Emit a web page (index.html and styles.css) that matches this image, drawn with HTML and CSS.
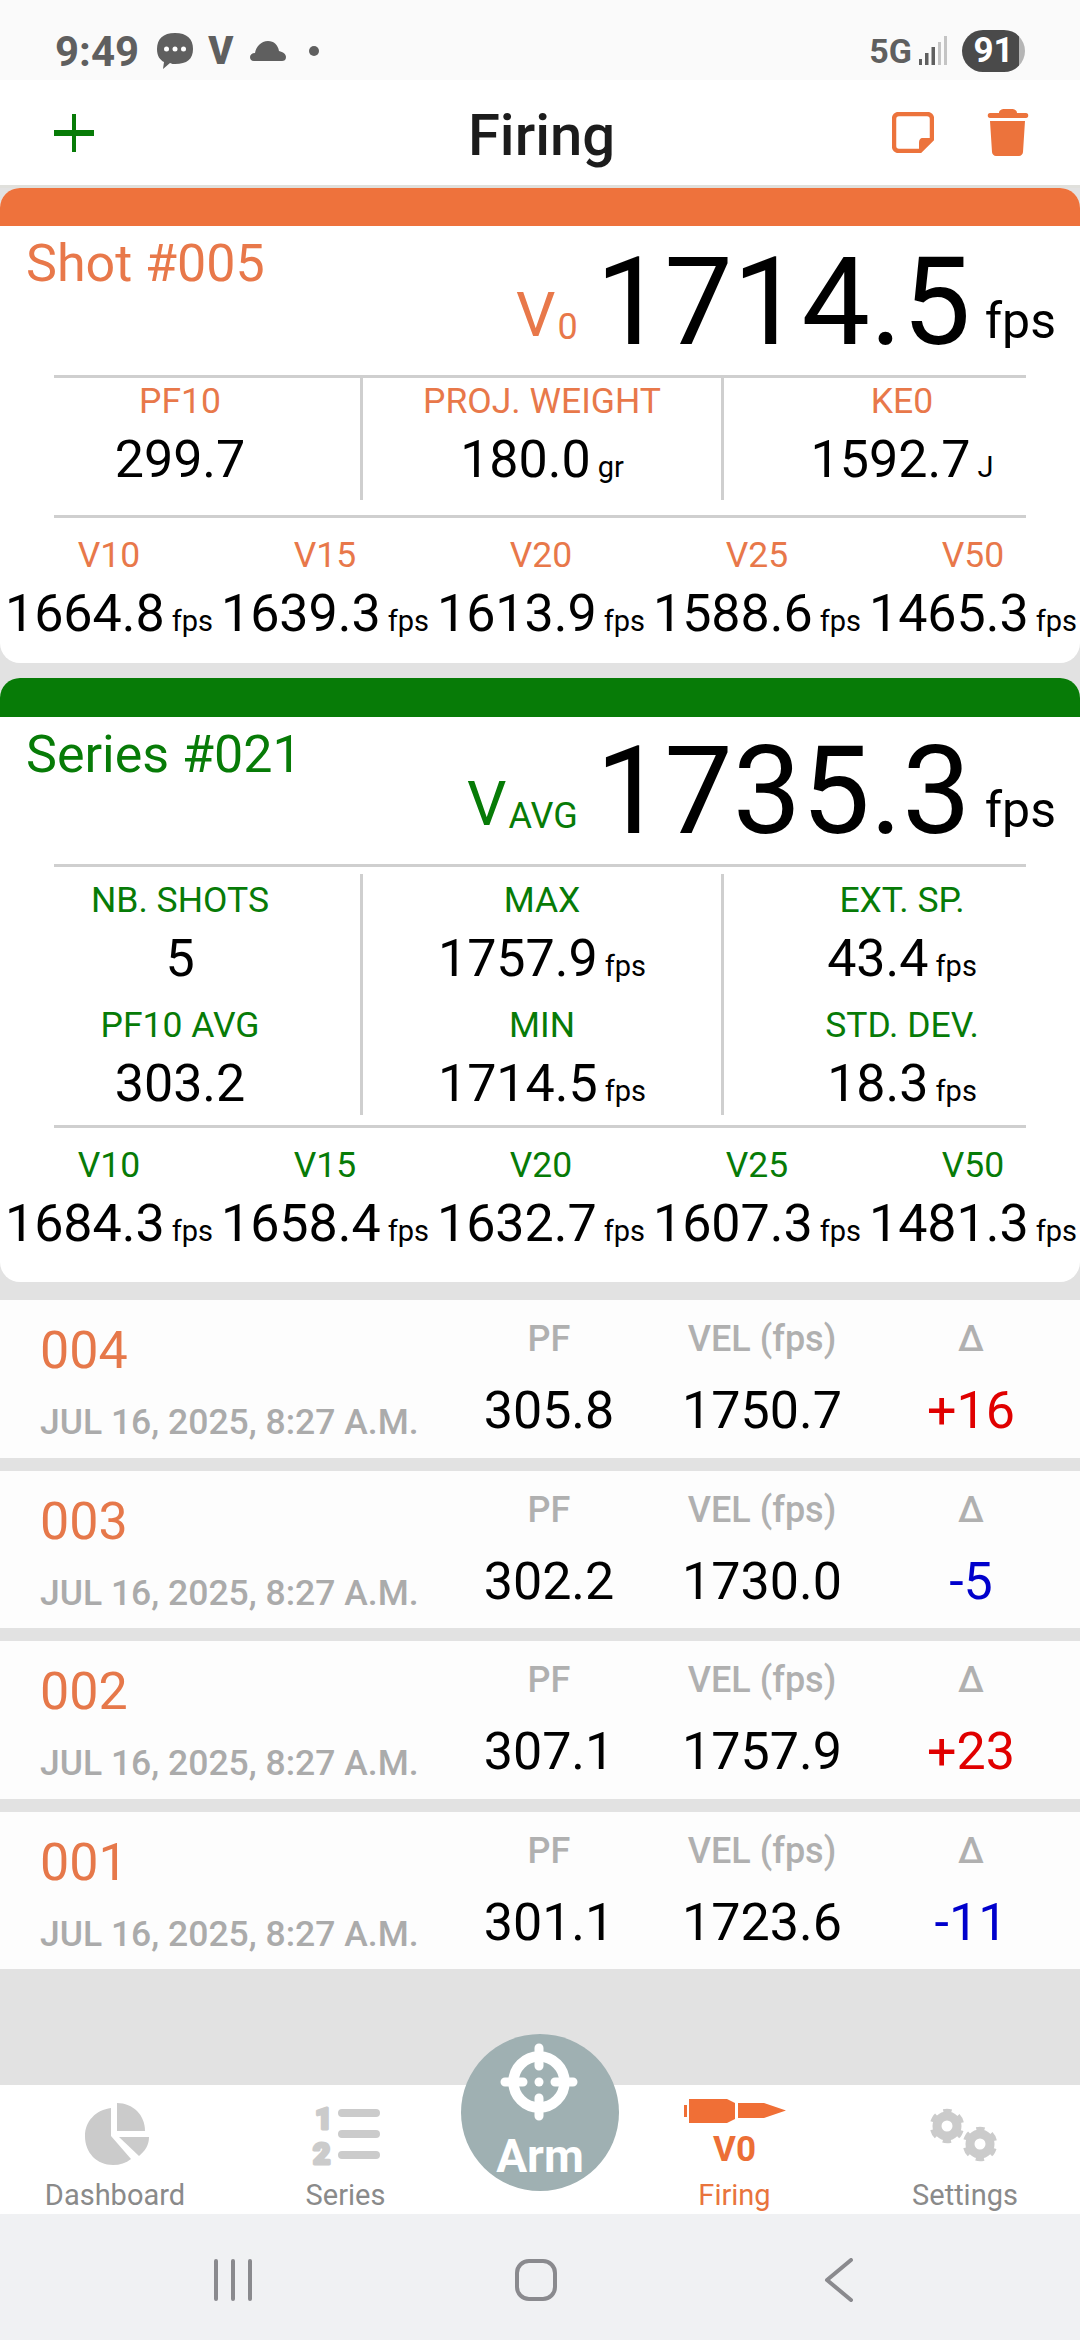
FILE: index.html
```html
<!DOCTYPE html>
<html>
<head>
    <meta charset="UTF-8">
    <title>Firing</title>
    <link rel="stylesheet" href="styles.css">
</head>
<body>
<div class="phone">

    <!-- android status bar -->
    <div class="status-bar">
        <div class="status-left">
            <span class="clock">9:49</span>
            <svg width="36" height="36" viewBox="0 0 36 36"><path d="M18 0C30 0 36 6 36 16C36 26 30 31 18 31C16 31 15 31 13 30L6 36L7 29C3 27 0 23 0 16C0 6 6 0 18 0Z" fill="#5f5f5f"/><circle cx="9.500" cy="16" r="2.500" fill="#fff"/><circle cx="18" cy="16" r="2.500" fill="#fff"/><circle cx="26.500" cy="16" r="2.500" fill="#fff"/></svg>
            <span class="status-v">V</span>
            <svg width="36" height="20" viewBox="0 0 36 20"><path d="M4 20C1 20 0 18 0 16C0 14 2 12 5 12C6 6 11 0 18 0C24 0 28 4 29 10C33 11 36 13 36 16C36 19 34 20 32 20Z" fill="#5f5f5f"/></svg>
            <span class="status-dot"></span>
        </div>
        <div class="status-right">
            <span class="network">5G</span>
            <svg width="28" height="30" viewBox="0 0 28 30"><path d="M0 23h3v6H0zM6 17h3.500v12H6zM12.500 11H16v18h-3.500z" fill="#5f5f5f"/><path d="M19 6h3v23h-3zM25 0h3v29h-3z" fill="#c4c4c4"/></svg>
            <span class="battery">91</span>
        </div>
    </div>

    <!-- title bar -->
    <div class="top-bar">
        <svg width="40" height="40" viewBox="0 0 40 40"><path d="M20 1V39" stroke="#077b07" stroke-width="4" fill="none"/><path d="M1 20H39" stroke="#077b07" stroke-width="6" stroke-linecap="round" fill="none"/></svg>
        <div class="top-title">Firing</div>
        <div class="top-actions">
            <svg width="42" height="41" viewBox="0 0 42 41"><path d="M7 2H35C38 2 40 4 40 7V27L28 39H7C4 39 2 37 2 34V7C2 4 4 2 7 2Z" fill="none" stroke="#ec733c" stroke-width="4.500"/><path d="M27 39V31C27 28 28 26 31 26H40V28L29 40Z" fill="#ec733c"/></svg>
            <svg width="42" height="47" viewBox="0 0 42 47"><path d="M12 4C12 1 15 0 17 0H25C27 0 30 1 30 4H39C42 4 42 9 39 9H3C0 9 0 4 3 4Z" fill="#ec733c"/><path d="M3 12H38L36 43C36 45 34 47 32 47H9C7 47 5 45 5 43Z" fill="#ec733c"/></svg>
        </div>
    </div>

    <div class="content">

        <!-- last shot -->
        <div class="card card-shot">
            <div class="card-strip"></div>
            <div class="card-head">
                <div class="card-name">Shot #005</div>
                <div class="big-speed">
                    <span class="big-v">V<sub>0</sub></span>
                    <span class="big-num">1714.5</span>
                    <span class="big-unit">fps</span>
                </div>
            </div>
            <div class="rule"></div>
            <div class="stats">
                <div class="stat-col">
                    <div class="stat"><div class="lbl">PF10</div><div class="val">299.7</div></div>
                </div>
                <div class="stat-col">
                    <div class="stat"><div class="lbl">PROJ. WEIGHT</div><div class="val">180.0<small>gr</small></div></div>
                </div>
                <div class="stat-col">
                    <div class="stat"><div class="lbl">KE0</div><div class="val">1592.7<small>J</small></div></div>
                </div>
            </div>
            <div class="rule"></div>
            <div class="drops">
                <div class="stat"><div class="lbl">V10</div><div class="val">1664.8<small>fps</small></div></div>
                <div class="stat"><div class="lbl">V15</div><div class="val">1639.3<small>fps</small></div></div>
                <div class="stat"><div class="lbl">V20</div><div class="val">1613.9<small>fps</small></div></div>
                <div class="stat"><div class="lbl">V25</div><div class="val">1588.6<small>fps</small></div></div>
                <div class="stat"><div class="lbl">V50</div><div class="val">1465.3<small>fps</small></div></div>
            </div>
        </div>

        <!-- current series -->
        <div class="card card-series">
            <div class="card-strip"></div>
            <div class="card-head">
                <div class="card-name">Series #021</div>
                <div class="big-speed">
                    <span class="big-v">V<sub>AVG</sub></span>
                    <span class="big-num">1735.3</span>
                    <span class="big-unit">fps</span>
                </div>
            </div>
            <div class="rule"></div>
            <div class="stats">
                <div class="stat-col">
                    <div class="stat"><div class="lbl">NB. SHOTS</div><div class="val">5</div></div>
                    <div class="stat"><div class="lbl">PF10 AVG</div><div class="val">303.2</div></div>
                </div>
                <div class="stat-col">
                    <div class="stat"><div class="lbl">MAX</div><div class="val">1757.9<small>fps</small></div></div>
                    <div class="stat"><div class="lbl">MIN</div><div class="val">1714.5<small>fps</small></div></div>
                </div>
                <div class="stat-col">
                    <div class="stat"><div class="lbl">EXT. SP.</div><div class="val">43.4<small>fps</small></div></div>
                    <div class="stat"><div class="lbl">STD. DEV.</div><div class="val">18.3<small>fps</small></div></div>
                </div>
            </div>
            <div class="rule"></div>
            <div class="drops">
                <div class="stat"><div class="lbl">V10</div><div class="val">1684.3<small>fps</small></div></div>
                <div class="stat"><div class="lbl">V15</div><div class="val">1658.4<small>fps</small></div></div>
                <div class="stat"><div class="lbl">V20</div><div class="val">1632.7<small>fps</small></div></div>
                <div class="stat"><div class="lbl">V25</div><div class="val">1607.3<small>fps</small></div></div>
                <div class="stat"><div class="lbl">V50</div><div class="val">1481.3<small>fps</small></div></div>
            </div>
        </div>

        <!-- previous shots -->
        <div class="shot-list">
            <div class="shot-row">
                <div class="shot-id"><div class="shot-num">004</div><div class="shot-date">JUL 16, 2025, 8:27 A.M.</div></div>
                <div class="shot-col"><div class="shot-lbl">PF</div><div class="shot-val">305.8</div></div>
                <div class="shot-col"><div class="shot-lbl">VEL (fps)</div><div class="shot-val">1750.7</div></div>
                <div class="shot-col"><div class="shot-lbl">Δ</div><div class="shot-val up">+16</div></div>
            </div>
            <div class="shot-row">
                <div class="shot-id"><div class="shot-num">003</div><div class="shot-date">JUL 16, 2025, 8:27 A.M.</div></div>
                <div class="shot-col"><div class="shot-lbl">PF</div><div class="shot-val">302.2</div></div>
                <div class="shot-col"><div class="shot-lbl">VEL (fps)</div><div class="shot-val">1730.0</div></div>
                <div class="shot-col"><div class="shot-lbl">Δ</div><div class="shot-val down">-5</div></div>
            </div>
            <div class="shot-row">
                <div class="shot-id"><div class="shot-num">002</div><div class="shot-date">JUL 16, 2025, 8:27 A.M.</div></div>
                <div class="shot-col"><div class="shot-lbl">PF</div><div class="shot-val">307.1</div></div>
                <div class="shot-col"><div class="shot-lbl">VEL (fps)</div><div class="shot-val">1757.9</div></div>
                <div class="shot-col"><div class="shot-lbl">Δ</div><div class="shot-val up">+23</div></div>
            </div>
            <div class="shot-row">
                <div class="shot-id"><div class="shot-num">001</div><div class="shot-date">JUL 16, 2025, 8:27 A.M.</div></div>
                <div class="shot-col"><div class="shot-lbl">PF</div><div class="shot-val">301.1</div></div>
                <div class="shot-col"><div class="shot-lbl">VEL (fps)</div><div class="shot-val">1723.6</div></div>
                <div class="shot-col"><div class="shot-lbl">Δ</div><div class="shot-val down">-11</div></div>
            </div>
        </div>
    </div>

    <!-- bottom tabs -->
    <div class="tabs">
        <div class="tab">
            <svg width="70" height="62" viewBox="0 0 70 62"><path d="M31 5V33L51 56C46 60 40 62 33 62C17 62 5 50 5 33C5 18 16 7 31 5Z" fill="#cbcbcb"/><path d="M37 0C53 0 65 12 65 28H37Z" fill="#cbcbcb"/><path d="M39 34H69C69 42 65 48 59 53Z" fill="#cbcbcb"/></svg>
            <div class="tab-lbl">Dashboard</div>
        </div>
        <div class="tab">
            <svg class="series-icon" width="70" height="62" viewBox="0 0 70 62"><text class="series-digit" x="4" y="26">1</text><text class="series-digit" x="2" y="61">2</text><path d="M31 10H65M31 31H65M31 52H65" stroke="#cbcbcb" stroke-width="8" stroke-linecap="round" fill="none"/></svg>
            <div class="tab-lbl">Series</div>
        </div>
        <div class="arm">
            <svg width="80" height="80" viewBox="0 0 80 80"><circle cx="39" cy="40" r="25.500" fill="none" stroke="#fff" stroke-width="10.500"/><path d="M39 6V24M39 56V74M5 40H23M55 40H73" stroke="#fff" stroke-width="9" stroke-linecap="round"/><circle cx="39" cy="40" r="4.500" fill="#fff"/></svg>
            <div class="arm-lbl">Arm</div>
        </div>
        <div class="tab tab-on">
            <svg width="102" height="24" viewBox="0 0 102 24"><path d="M0 6H3V18H0ZM5 0H43L51 4V20L43 24H5ZM54 4H80L102 11.500L80 19H54Z" fill="#f06f36"/></svg>
            <div class="tab-v0">V0</div>
            <div class="tab-lbl">Firing</div>
        </div>
        <div class="tab">
            <svg width="70" height="62" viewBox="0 0 70 62"><g fill="none" stroke="#cbcbcb"><circle cx="17" cy="23" r="10" stroke-width="9"/><circle cx="17" cy="23" r="15" stroke-width="4.500" stroke-dasharray="8 7.700" stroke-dashoffset="4" transform="rotate(30 17 23)"/><circle cx="50" cy="41" r="10" stroke-width="9"/><circle cx="50" cy="41" r="15" stroke-width="4.500" stroke-dasharray="8 7.700" stroke-dashoffset="4" transform="rotate(30 50 41)"/></g></svg>
            <div class="tab-lbl">Settings</div>
        </div>
    </div>

    <!-- android nav bar -->
    <div class="nav-bar">
        <svg width="40" height="42" viewBox="0 0 40 42"><path d="M3 2V40M20 2V40M37 2V40" stroke="#8a8a8e" stroke-width="4" stroke-linecap="round"/></svg>
        <svg width="42" height="42" viewBox="0 0 42 42"><rect x="2" y="2" width="38" height="38" rx="12" fill="none" stroke="#8a8a8e" stroke-width="4"/></svg>
        <svg width="30" height="44" viewBox="0 0 30 44"><path d="M27 2L3 22L27 42" stroke="#8a8a8e" stroke-width="4" stroke-linecap="round" stroke-linejoin="round" fill="none"/></svg>
    </div>
</div>
</body>
</html>
```

FILE: styles.css
```css
html, body {
    margin: 0px;
    background: #e2e2e2;
    font-family: "Roboto", "Liberation Sans", sans-serif;
}

.phone {
    width: 1080px;
    height: 2340px;
    display: flex;
    flex-direction: column;
    overflow: hidden;
}

/* status bar */
.status-bar {
    height: 80px;
    flex: none;
    box-sizing: border-box;
    background: #fafafa;
    display: flex;
    justify-content: space-between;
    align-items: center;
    padding: 22px 55px 0 55px;
    color: #5f5f5f;
}
.status-left, .status-right {
    display: flex;
    align-items: center;
}
.clock {
    font-size: 42px;
    font-weight: 700;
    margin-right: 18px;
}
.status-v {
    font-size: 38px;
    font-weight: 900;
    margin: 0 17px 0 15px;
}
.status-dot {
    width: 10px;
    height: 10px;
    border-radius: 50%;
    background: #5f5f5f;
    margin-left: 23px;
}
.network {
    font-size: 34px;
    font-weight: 700;
    margin-right: 7px;
}
.battery {
    width: 63px;
    height: 42px;
    margin-left: 15px;
    border-radius: 21px;
    background: linear-gradient(to right, #4a4a4a 90%, #b5b5b5 90%);
    color: #fff;
    font-size: 35px;
    font-weight: 700;
    text-align: center;
    line-height: 42px;
}

/* title bar */
.top-bar {
    height: 108px;
    flex: none;
    box-sizing: border-box;
    background: #fff;
    border-bottom: 3px solid #e0e0dc;
    display: grid;
    grid-template-columns: 1fr auto 1fr;
    align-items: center;
    padding: 0 51px 0 54px;
}
.top-title {
    font-size: 58px;
    font-weight: 500;
    color: #1c1c1c;
    padding-top: 4px;
}
.top-actions {
    display: flex;
    justify-content: flex-end;
    align-items: center;
    gap: 53px;
}

/* cards */
.content {
    flex: 1;
    min-height: 0;
}
.card {
    background: #fff;
    border-radius: 20px;
    margin-bottom: 15px;
    color: #000;
}
.card-strip {
    height: 38px;
    border-radius: 20px 20px 0 0;
}
.card-shot .card-strip { background: #ee723c; }
.card-series .card-strip { background: #077b07; height: 39px; }
.card-shot .lbl, .card-shot .card-name, .card-shot .big-v { color: #e8784a; }
.card-series .lbl, .card-series .card-name, .card-series .big-v { color: #077b07; }

.card-head {
    height: 149px;
    box-sizing: border-box;
    display: flex;
    justify-content: space-between;
    align-items: flex-start;
    padding: 0 24px 14px 26px;
}
.card-series .card-head { height: 147px; }
.card-name {
    font-size: 52px;
    line-height: 60px;
    margin-top: 8px;
}
.big-speed {
    align-self: flex-end;
    line-height: 0;
    white-space: nowrap;
    font-size: 0;
}
.big-v {
    font-size: 62px;
    line-height: 60px;
    vertical-align: 8px;
    margin-right: 18px;
}
.big-v sub {
    font-size: 36px;
    line-height: 30px;
    vertical-align: -3px;
    margin-left: 2px;
}
.big-num {
    font-size: 122px;
    line-height: 116px;
}
.big-unit {
    font-size: 50px;
    line-height: 60px;
    vertical-align: 6px;
    margin-left: 14px;
}

.rule {
    height: 3px;
    margin: 0 54px;
    background: #cfcfcf;
}
.stats {
    display: grid;
    grid-template-columns: 360px 361px 359px;
}
.card-shot .stats { padding-bottom: 15px; }
.card-shot .stat-col { padding: 1px 0 9px; }
.card-series .stats { padding: 7px 0 10px; }
.card-series .stat-col { padding: 4px 0 0; }
.stat-col + .stat-col {
    border-left: 3px solid #cfcfcf;
}
.stat {
    text-align: center;
    white-space: nowrap;
}
.stat-col .stat + .stat {
    margin-top: 13px;
}
.lbl {
    font-size: 35.500px;
    line-height: 44px;
}
.val {
    font-size: 52px;
    line-height: 62px;
    padding-top: 6px;
}
.val small {
    font-size: 29px;
    line-height: 1;
    margin-left: 7px;
}
.drops {
    display: grid;
    grid-template-columns: repeat(5, 216px);
    padding: 15px 0 18px 1px;
}
.card-series .drops { padding-bottom: 27px; }

/* shot rows */
.shot-list {
    display: flex;
    flex-direction: column;
    gap: 13px;
    margin-top: 18px;
}
.shot-row {
    height: 157.500px;
    background: #fdfdfd;
    display: grid;
    grid-template-columns: 404px 210px 216px 202px;
    padding-left: 40px;
    align-items: start;
}
.shot-num {
    font-size: 52px;
    line-height: 62px;
    color: #e6784a;
    padding-top: 20px;
}
.shot-date {
    font-size: 35.500px;
    font-weight: 500;
    color: #ababab;
    line-height: 44px;
    padding-top: 18px;
    white-space: nowrap;
}
.shot-col {
    text-align: center;
}
.shot-lbl {
    font-size: 36px;
    font-weight: 500;
    color: #b0b0b0;
    line-height: 44px;
    padding-top: 17px;
}
.shot-val {
    font-size: 52px;
    line-height: 62px;
    color: #000;
    padding-top: 19px;
}
.up { color: #e00000; }
.down { color: #0000cc; }

/* bottom tabs */
.tabs {
    height: 129px;
    flex: none;
    background: #fff;
    display: grid;
    grid-template-columns: 230px 231px 158px 231px 230px;
}
.tab {
    display: flex;
    flex-direction: column;
    align-items: center;
    justify-content: flex-end;
}
.tab > svg {
    margin-bottom: 11px;
}
.tab-on > svg {
    margin-bottom: 0;
}
.tab-lbl {
    font-size: 29px;
    line-height: 38px;
    color: #8a8a8a;
}
.tab-on .tab-lbl { color: #e9743c; }
.tab-v0 {
    font-size: 35px;
    font-weight: 700;
    color: #ec6f36;
    line-height: 44px;
    margin: 5px 0 4px;
}
.series-icon {
    overflow: visible;
}
.series-digit {
    font-size: 30px;
    font-weight: 900;
    fill: #cbcbcb;
    stroke: #cbcbcb;
    stroke-width: 3px;
    stroke-linejoin: round;
}
.arm {
    width: 158px;
    height: 157px;
    margin-top: -51px;
    border-radius: 50%;
    background: #9fb0b2;
    display: flex;
    flex-direction: column;
    align-items: center;
    padding-top: 8px;
    box-sizing: border-box;
}
.arm-lbl {
    font-size: 46px;
    font-weight: 700;
    color: #fff;
    line-height: 48px;
    margin-top: 10px;
}

/* android nav */
.nav-bar {
    height: 126px;
    flex: none;
    box-sizing: border-box;
    background: #f0f1f3;
    display: flex;
    align-items: center;
    justify-content: center;
    padding: 6px 13px 0 0;
    gap: 262px;
}
.nav-bar svg:last-child {
    margin-left: 5px;
}
```
